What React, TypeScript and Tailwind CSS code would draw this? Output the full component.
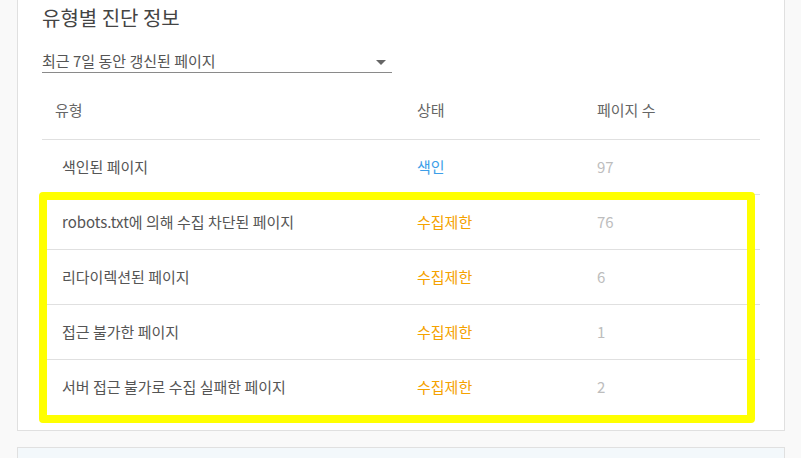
const rows = [
  { name: '색인된 페이지', status: '색인', tone: 'blue', count: 97 },
  { name: 'robots.txt에 의해 수집 차단된 페이지', status: '수집제한', tone: 'orange', count: 76 },
  { name: '리다이렉션된 페이지', status: '수집제한', tone: 'orange', count: 6 },
  { name: '접근 불가한 페이지', status: '수집제한', tone: 'orange', count: 1 },
  { name: '서버 접근 불가로 수집 실패한 페이지', status: '수집제한', tone: 'orange', count: 2 },
];

export default function App() {
  return (
    <main className="h-screen bg-[#f9f9f9] font-['Noto_Sans_CJK_KR','Noto_Sans',sans-serif] overflow-hidden">
      <section className="ml-[17px] w-[768px] border-x border-b border-[#e0e0e0] bg-white px-6 pt-[4px] pb-[15px]">
        <h2 className="text-[20px] leading-[28px] text-[#444] font-normal">유형별 진단 정보</h2>

        {/* period select */}
        <div className="mt-[18px] w-[350px] h-[23px] border-b border-[#8a8a8a] flex items-center justify-between">
          <span className="text-[15px] leading-[20px] text-[#555]">최근 7일 동안 갱신된 페이지</span>
          <svg width="10" height="5" viewBox="0 0 10 5" className="mr-[6px] mt-[3px]">
            <path d="M0 0h10L5 5z" fill="#666" />
          </svg>
        </div>

        <div className="mt-[9px] w-[718px]">
          <div className="grid grid-cols-[375px_180px_1fr] h-[58px] items-center border-b border-[#e0e0e0] text-[15px] text-[#666]">
            <span className="pl-[13px]">유형</span>
            <span>상태</span>
            <span>페이지 수</span>
          </div>
          <div className="relative">
            {rows.map((r, i) => (
              <div
                key={r.name}
                className={
                  'grid grid-cols-[375px_180px_1fr] h-[55px] items-center text-[15px] ' +
                  (i < rows.length - 1 ? 'border-b border-[#e0e0e0]' : '')
                }
              >
                <span className="pl-[20px] text-[#555]">{r.name}</span>
                <span className={r.tone === 'blue' ? 'text-[#3d9ee8]' : 'text-[#f5a200]'}>{r.status}</span>
                <span className="text-[#bdbdbd]">{r.count}</span>
              </div>
            ))}
            {/* highlight */}
            <div className="absolute left-[-3px] top-[52px] w-[716px] h-[231px] border-[8px] border-[#ffff00] rounded-[4px] pointer-events-none" />
          </div>
        </div>
      </section>

      <section className="ml-[17px] mt-[16px] w-[768px] h-[40px] border border-[#e0e0e0] bg-[#f3f8fb]" />
    </main>
  );
}
